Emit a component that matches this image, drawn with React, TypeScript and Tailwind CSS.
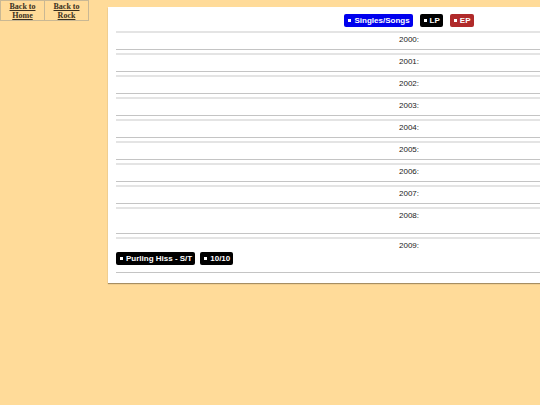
import React from "react";

type Release = { title: string; kind: "single" | "lp" | "ep" };

const years: { year: string; releases: Release[]; extra?: boolean }[] = [
  { year: "2000", releases: [] },
  { year: "2001", releases: [] },
  { year: "2002", releases: [] },
  { year: "2003", releases: [] },
  { year: "2004", releases: [] },
  { year: "2005", releases: [] },
  { year: "2006", releases: [] },
  { year: "2007", releases: [] },
  { year: "2008", releases: [], extra: true },
  {
    year: "2009",
    releases: [
      { title: "Purling Hiss - S/T", kind: "lp" },
      { title: "10/10", kind: "lp" },
    ],
  },
];

const kindClass: Record<Release["kind"], string> = {
  single: "bg-[#0000ee]",
  lp: "bg-black",
  ep: "bg-[#b02a2a]",
};

function Badge({ label, kind }: { label: string; kind: Release["kind"] }) {
  return (
    <span
      className={`inline-flex h-[13px] items-center gap-[3px] rounded-[2px] pl-[4px] pr-[3px] text-[8px] font-bold leading-none text-white ${kindClass[kind]}`}
    >
      <span className="h-[3px] w-[3px] bg-white" />
      {label}
    </span>
  );
}

function NavTable() {
  return (
    <table className="shrink-0 border-collapse border border-[#c9b894] font-['Liberation_Serif',serif] text-[8px] leading-[9px] font-bold">
      <tbody>
        <tr>
          <td className="h-[20px] w-[44px] border border-[#c9b894] text-center align-middle">
            <a href="#" className="text-[#3a3020] underline">
              Back to
              <br />
              Home
            </a>
          </td>
          <td className="h-[20px] w-[44px] border border-[#c9b894] text-center align-middle">
            <a href="#" className="text-[#3a3020] underline">
              Back to
              <br />
              Rock
            </a>
          </td>
        </tr>
      </tbody>
    </table>
  );
}

export default function App() {
  return (
    <div className="h-[405px] w-[540px] overflow-hidden bg-[#ffdb99] font-['Liberation_Sans',Arial,sans-serif]">
      <div className="flex items-start gap-[19px]">
        <NavTable />
        <div className="mt-[7px] w-[602px] shrink-0 bg-white px-[8px] pt-[7px] pb-[10px] shadow-[0_1px_1px_rgba(0,0,0,0.35)]">
          <div className="mb-[4px] flex justify-center gap-[7px]">
            <Badge label="Singles/Songs" kind="single" />
            <Badge label="LP" kind="lp" />
            <Badge label="EP" kind="ep" />
          </div>
          {years.map((y) => (
            <div key={y.year} className="mb-[3px] border-t-2 border-[#e4e4e4] pt-[2px] last:mb-0">
              <div className="h-[10px] text-center text-[8px] leading-[10px] text-[#222]">
                {y.year}:
              </div>
              {y.extra && <div className="h-[8px]" />}
              {y.releases.length > 0 && (
                <div className="mt-[1px] mb-[7px] flex gap-[5px]">
                  {y.releases.map((r) => (
                    <Badge key={r.title} label={r.title} kind={r.kind} />
                  ))}
                </div>
              )}
              <div className="mt-[4px] border-t border-[#c4c4c4]" />
            </div>
          ))}
        </div>
      </div>
    </div>
  );
}
